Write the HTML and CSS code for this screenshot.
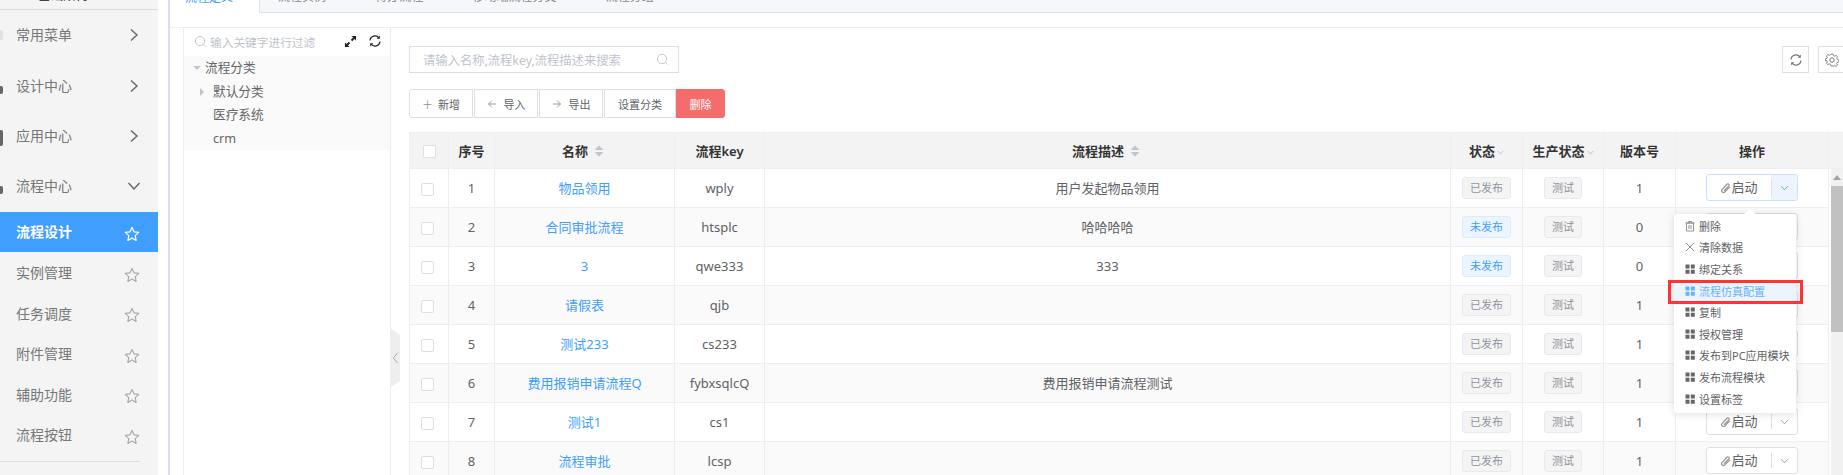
FILE: index.html
```html
<!DOCTYPE html>
<html lang="zh">
<head>
<meta charset="utf-8">
<title>流程设计</title>
<link rel="stylesheet" href="styles.css">
</head>
<body>
<svg class="defs" width="0" height="0" aria-hidden="true">
  <symbol id="star" viewBox="0 0 16 16"><path d="M8 1.400l2 4.400 4.700.6-3.500 3.200.9 4.800L8 11.900l-4.100 2.500.9-4.800L1.300 6.400 6 5.800z" fill="none" stroke="currentColor" stroke-width="1.200" stroke-linejoin="round"/></symbol>
  <symbol id="right" viewBox="0 0 10 14"><path d="M2 1.500L8 7l-6 5.500" fill="none" stroke="currentColor" stroke-width="1.400"/></symbol>
  <symbol id="down" viewBox="0 0 14 10"><path d="M1.500 2L7 8l5.500-6" fill="none" stroke="currentColor" stroke-width="1.400"/></symbol>
  <symbol id="grid" viewBox="0 0 12 12"><path d="M1.500 1.500h4v4h-4zM6.800 1.500h4v4h-4zM1.500 6.800h4v4h-4zM6.800 6.800h4v4h-4z" fill="currentColor"/></symbol>
  <symbol id="search" viewBox="0 0 14 14"><circle cx="6.500" cy="6.500" r="5" fill="none" stroke="currentColor"/><path d="M10 10l2.500 2.500" stroke="currentColor"/></symbol>
  <symbol id="clip" viewBox="0 0 14 14"><path d="M12.500 5.500L6.300 12a2.400 2.400 0 0 1-3.500-3.300l6-6.500a1.600 1.600 0 0 1 2.400 2.200L5.200 10.500" fill="none" stroke="currentColor" stroke-width="1.500"/></symbol>
  <symbol id="sync" viewBox="0 0 14 14"><path d="M2 6.500A5 5 0 0 1 11 4M12 7.500A5 5 0 0 1 3 10" fill="none" stroke="currentColor" stroke-width="1.200"/><path d="M11.800 1.500v3.200H8.600zM2.200 12.500V9.300h3.200z" fill="currentColor"/></symbol>
  <symbol id="caret" viewBox="0 0 10 12"><path d="M5 .5L9.500 5h-9zM5 11.500L.5 7h9z" fill="currentColor"/></symbol>
</svg>

<div class="page">
  <aside class="sidebar">
    <div class="brand"><span class="clipped">基础架构</span></div>
    <div class="menu-row"><i class="sliver sliver-light"></i><span class="menu-label">常用菜单</span><svg class="chev"><use href="#right"/></svg></div>
    <div class="menu-row"><i class="sliver sliver-low"></i><span class="menu-label">设计中心</span><svg class="chev"><use href="#right"/></svg></div>
    <div class="menu-row"><i class="sliver sliver-tall"></i><span class="menu-label">应用中心</span><svg class="chev"><use href="#right"/></svg></div>
    <div class="menu-row"><i class="sliver sliver-low"></i><span class="menu-label">流程中心</span><svg class="chev chev-down"><use href="#down"/></svg></div>
    <div class="sub-row sub-active"><span class="menu-label">流程设计</span><svg class="star"><use href="#star"/></svg></div>
    <div class="sub-row"><span class="menu-label">实例管理</span><svg class="star"><use href="#star"/></svg></div>
    <div class="sub-row"><span class="menu-label">任务调度</span><svg class="star"><use href="#star"/></svg></div>
    <div class="sub-row"><span class="menu-label">附件管理</span><svg class="star"><use href="#star"/></svg></div>
    <div class="sub-row"><span class="menu-label">辅助功能</span><svg class="star"><use href="#star"/></svg></div>
    <div class="sub-row"><span class="menu-label">流程按钮</span><svg class="star"><use href="#star"/></svg></div>
    <div class="side-divider"></div>
  </aside>

  <main class="main">
    <nav class="tabs">
      <div class="tab tab-active">流程定义**</div>
      <div class="tab">流程实例**</div>
      <div class="tab">待办流程**</div>
      <div class="tab">移动端流程分类**</div>
      <div class="tab">流程分组**</div>
      <div class="tab-rest"></div>
    </nav>

    <div class="content">
      <section class="tree">
        <div class="tree-search">
          <svg class="tree-search-icon"><use href="#search"/></svg>
          <span class="tree-placeholder">输入关键字进行过滤</span>
          <svg class="expand-icon" viewBox="0 0 14 14"><path d="M8 1h5v5l-1.800-1.800-2.400 2.400-1.400-1.400 2.400-2.400zM6 13H1V8l1.800 1.800 2.400-2.400 1.400 1.400-2.400 2.400z" fill="#222"/></svg>
          <svg class="sync-dark"><use href="#sync"/></svg>
        </div>
        <div class="tree-list">
          <div class="tree-node"><i class="tri-down"></i>流程分类</div>
          <div class="tree-node tree-child"><i class="tri-right"></i>默认分类</div>
          <div class="tree-node tree-child">医疗系统</div>
          <div class="tree-node tree-child">crm</div>
        </div>
      </section>

      <section class="list">
        <div class="toolbar">
          <div class="search-box"><span class="search-ph">请输入名称,流程key,流程描述来搜索</span><svg class="search-icon"><use href="#search"/></svg></div>
          <div class="tool-group">
            <div class="tool"><svg class="tool-icon"><use href="#sync"/></svg></div>
            <div class="tool"><svg class="tool-icon" viewBox="0 0 14 14"><circle cx="7" cy="7" r="2.200" fill="none" stroke="currentColor"/><path d="M6 1h2l.4 1.600 1.300.6 1.500-.8 1.300 1.400-.8 1.400.6 1.300 1.600.4v2l-1.600.4-.6 1.300.8 1.500-1.400 1.300-1.400-.8-1.300.6L8 13H6l-.4-1.600-1.300-.6-1.500.8-1.300-1.400.8-1.400-.6-1.300L.1 8V6l1.600-.4.600-1.300-.8-1.500 1.400-1.300 1.400.8 1.300-.6z" fill="none" stroke="currentColor" stroke-width=".9"/></svg></div>
          </div>
        </div>

        <div class="actions">
          <div class="btn btn-add"><span class="btn-glyph">＋</span>新增</div>
          <div class="btn btn-io"><svg class="arrow" viewBox="0 0 10 10"><path d="M9 5H1.500M5 1.500L1.500 5 5 8.500" fill="none" stroke="currentColor" stroke-width=".9"/></svg>导入</div>
          <div class="btn btn-io"><svg class="arrow" viewBox="0 0 10 10"><path d="M1 5h7.500M5 1.500L8.500 5 5 8.500" fill="none" stroke="currentColor" stroke-width=".9"/></svg>导出</div>
          <div class="btn btn-cat">设置分类</div>
          <div class="btn btn-del">删除</div>
        </div>

        <table class="grid grid-head">
          <colgroup><col class="c1"><col class="c2"><col class="c3"><col class="c4"><col class="c5"><col class="c6"><col class="c7"><col class="c8"><col class="c9"><col class="c10"></colgroup>
          <tr>
            <th><span class="check"></span></th>
            <th>序号</th>
            <th>名称<svg class="sort"><use href="#caret"/></svg></th>
            <th>流程key</th>
            <th>流程描述<svg class="sort"><use href="#caret"/></svg></th>
            <th>状态<svg class="mini-down"><use href="#down"/></svg></th>
            <th>生产状态<svg class="mini-down"><use href="#down"/></svg></th>
            <th>版本号</th>
            <th>操作</th>
            <th></th>
          </tr>
        </table>

        <div class="grid-wrap">
          <table class="grid grid-body">
            <colgroup><col class="c1"><col class="c2"><col class="c3"><col class="c4"><col class="c5"><col class="c6"><col class="c7"><col class="c8"><col class="c9"></colgroup>
            <tr>
              <td class="td-check"><span class="check"></span></td><td>1</td><td class="link">物品领用</td><td>wply</td><td>用户发起物品领用</td>
              <td><span class="tag">已发布</span></td><td><span class="tag tag-sm">测试</span></td><td>1</td>
              <td><div class="start start-on"><span class="start-main"><svg class="clip"><use href="#clip"/></svg>启动</span><span class="start-more"><svg class="more-icon"><use href="#down"/></svg></span></div></td>
            </tr>
            <tr>
              <td class="td-check"><span class="check"></span></td><td>2</td><td class="link">合同审批流程</td><td>htsplc</td><td>哈哈哈哈</td>
              <td><span class="tag tag-blue">未发布</span></td><td><span class="tag tag-sm">测试</span></td><td>0</td>
              <td><div class="start"><span class="start-main"><svg class="clip"><use href="#clip"/></svg>启动</span><span class="start-more"><svg class="more-icon"><use href="#down"/></svg></span></div></td>
            </tr>
            <tr>
              <td class="td-check"><span class="check"></span></td><td>3</td><td class="link">3</td><td>qwe333</td><td>333</td>
              <td><span class="tag tag-blue">未发布</span></td><td><span class="tag tag-sm">测试</span></td><td>0</td>
              <td><div class="start"><span class="start-main"><svg class="clip"><use href="#clip"/></svg>启动</span><span class="start-more"><svg class="more-icon"><use href="#down"/></svg></span></div></td>
            </tr>
            <tr>
              <td class="td-check"><span class="check"></span></td><td>4</td><td class="link">请假表</td><td>qjb</td><td></td>
              <td><span class="tag">已发布</span></td><td><span class="tag tag-sm">测试</span></td><td>1</td>
              <td><div class="start"><span class="start-main"><svg class="clip"><use href="#clip"/></svg>启动</span><span class="start-more"><svg class="more-icon"><use href="#down"/></svg></span></div></td>
            </tr>
            <tr>
              <td class="td-check"><span class="check"></span></td><td>5</td><td class="link">测试233</td><td>cs233</td><td></td>
              <td><span class="tag">已发布</span></td><td><span class="tag tag-sm">测试</span></td><td>1</td>
              <td><div class="start"><span class="start-main"><svg class="clip"><use href="#clip"/></svg>启动</span><span class="start-more"><svg class="more-icon"><use href="#down"/></svg></span></div></td>
            </tr>
            <tr>
              <td class="td-check"><span class="check"></span></td><td>6</td><td class="link">费用报销申请流程Q</td><td>fybxsqlcQ</td><td>费用报销申请流程测试</td>
              <td><span class="tag">已发布</span></td><td><span class="tag tag-sm">测试</span></td><td>1</td>
              <td><div class="start"><span class="start-main"><svg class="clip"><use href="#clip"/></svg>启动</span><span class="start-more"><svg class="more-icon"><use href="#down"/></svg></span></div></td>
            </tr>
            <tr>
              <td class="td-check"><span class="check"></span></td><td>7</td><td class="link">测试1</td><td>cs1</td><td></td>
              <td><span class="tag">已发布</span></td><td><span class="tag tag-sm">测试</span></td><td>1</td>
              <td><div class="start"><span class="start-main"><svg class="clip"><use href="#clip"/></svg>启动</span><span class="start-more"><svg class="more-icon"><use href="#down"/></svg></span></div></td>
            </tr>
            <tr>
              <td class="td-check"><span class="check"></span></td><td>8</td><td class="link">流程审批</td><td>lcsp</td><td></td>
              <td><span class="tag">已发布</span></td><td><span class="tag tag-sm">测试</span></td><td>1</td>
              <td><div class="start"><span class="start-main"><svg class="clip"><use href="#clip"/></svg>启动</span><span class="start-more"><svg class="more-icon"><use href="#down"/></svg></span></div></td>
            </tr>
          </table>
          <div class="scrollbar"><i class="scroll-up"></i><div class="scroll-thumb"></div></div>
        </div>
      </section>
    </div>
  </main>

  <div class="handle"><svg class="handle-icon" viewBox="0 0 8 14"><path d="M6.500 1L1.500 7l5 6" fill="none" stroke="currentColor" stroke-width="1.100"/></svg></div>

  <div class="dropdown">
    <i class="drop-arrow"></i>
    <div class="drop-item"><svg class="drop-icon" viewBox="0 0 12 12"><path d="M2.500 3h7v8h-7zM1.500 3h9M4.500 3V1.500h3V3M5 5v4M7 5v4" fill="none" stroke="currentColor"/></svg>删除</div>
    <div class="drop-item"><svg class="drop-icon" viewBox="0 0 12 12"><path d="M2 2l8 8M10 2l-8 8" stroke="currentColor"/></svg>清除数据</div>
    <div class="drop-item"><svg class="drop-icon drop-grid"><use href="#grid"/></svg>绑定关系</div>
    <div class="drop-item drop-on"><svg class="drop-icon"><use href="#grid"/></svg>流程仿真配置</div>
    <div class="drop-item"><svg class="drop-icon drop-grid"><use href="#grid"/></svg>复制</div>
    <div class="drop-item"><svg class="drop-icon drop-grid"><use href="#grid"/></svg>授权管理</div>
    <div class="drop-item"><svg class="drop-icon drop-grid"><use href="#grid"/></svg>发布到PC应用模块</div>
    <div class="drop-item"><svg class="drop-icon drop-grid"><use href="#grid"/></svg>发布流程模块</div>
    <div class="drop-item"><svg class="drop-icon drop-grid"><use href="#grid"/></svg>设置标签</div>
  </div>
  <div class="red-mark"></div>
</div>
</body>
</html>
```

FILE: styles.css
```css
* { box-sizing: border-box; }
html, body { margin: 0; padding: 0; background: #fff; }
body {
  font-family: "Noto Sans", "Noto Sans CJK SC", "Liberation Sans", sans-serif;
  font-size: 13px;
  color: #606266;
}
.defs { position: absolute; }
.page { position: relative; display: flex; width: 1843px; height: 475px; overflow: hidden; }

/* sidebar */
.sidebar { width: 158px; flex: none; height: 475px; background: #f4f4f4; margin-right: 10px; }
.brand { height: 10px; border-bottom: 1px solid #dcdcdc; overflow: hidden; display: flex; padding-left: 38px; align-items: flex-end; }
.clipped { display: block; height: 20px; margin-bottom: 3px; line-height: 20px; font-size: 12.500px; color: #444; font-weight: 500; flex: none; }
.menu-row { height: 50.400px; display: flex; align-items: center; color: #666; }
.menu-label { font-size: 14px; color: #777; line-height: 20px; flex: 1; }
.sliver { width: 3px; height: 10px; margin-right: 13px; flex: none; background: #666; border-radius: 0 2px 2px 0; }
.sliver-light { background: #e2e2e2; }
.sliver-low { height: 8px; margin-top: 8px; }
.sliver-tall { height: 16px; margin-top: 4px; }
.chev { width: 10px; height: 14px; margin-right: 19px; color: #666; flex: none; }
.chev-down { width: 14px; height: 10px; margin-right: 17px; }
.sub-row { height: 40.500px; display: flex; align-items: center; padding: 3px 18px 0 16px; }
.star { width: 16px; height: 16px; color: #aaa; flex: none; margin-top: 3px; }
.sub-active { background: #409eff; height: 40px; padding-top: 1px; }
.sub-active .menu-label { color: #fff; font-weight: 700; }
.sub-active .star { color: #fff; }
.side-divider { height: 1px; width: 140px; background: #ddd; margin-top: 7px; }

/* main */
.main { flex: 1; min-width: 0; border-left: 2px solid #dcdde6; }
.tabs { display: flex; height: 13px; }
.tab { padding: 0 18px 8px; height: 13px; border-bottom: 1px solid #dfe4ed; background: #f5f7fa; overflow: hidden; display: flex; align-items: flex-end; font-size: 12px; line-height: 14px; color: #888; white-space: nowrap; flex: none; }
.tab-active { width: 90px; padding-left: 15px; background: #fff; color: #409eff; border-bottom: 0; border-right: 1px solid #dfe4ed; }
.tab-rest { flex: 1; background: #f5f7fa; border-bottom: 1px solid #dfe4ed; }
.content { margin-top: 14px; border-top: 1px solid #eee; padding-left: 13px; display: flex; height: 448px; }

/* tree */
.tree { width: 208px; flex: none; border-left: 1px solid #eee; border-right: 1px solid #eee; }
.tree-search { height: 28px; display: flex; align-items: center; padding: 0 0 2px 10px; }
.tree-search-icon { width: 13px; height: 13px; color: #c0c4cc; margin-right: 3px; flex: none; }
.tree-placeholder { font-size: 11.700px; color: #c0c4cc; width: 134px; white-space: nowrap; }
.expand-icon { width: 13px; height: 13px; flex: none; margin-right: 11px; }
.sync-dark { width: 14px; height: 14px; color: #222; flex: none; }
.tree-list { background: #fafafa; height: 94px; }
.tree-node { height: 23.500px; line-height: 23px; font-size: 12.700px; color: #666; padding-left: 21px; position: relative; display: flex; align-items: center; }
.tree-child { padding-left: 29px; }
.tri-down { position: absolute; left: 9px; top: 10px; border: 4px solid transparent; border-top: 4px solid #c0c4cc; border-bottom: 0; width: 0; height: 0; }
.tri-right { position: absolute; left: 16px; top: 8px; border: 4px solid transparent; border-left: 4px solid #c0c4cc; border-right: 0; width: 0; height: 0; }

/* list */
.list { flex: 1; min-width: 0; padding: 18px 0 0 18px; }
.toolbar { display: flex; justify-content: space-between; height: 27px; }
.search-box { width: 270px; height: 27px; border: 1px solid #dcdfe6; display: flex; align-items: center; justify-content: space-between; padding: 0 9px 0 13px; }
.search-ph { font-size: 12.300px; color: #c0c4cc; white-space: nowrap; }
.search-icon { width: 13px; height: 13px; color: #c0c4cc; flex: none; }
.tool-group { display: flex; gap: 9px; margin-right: -2px; }
.tool { width: 27px; height: 27px; border: 1px solid #dcdfe6; display: flex; align-items: center; justify-content: center; color: #777; }
.tool-icon { width: 14px; height: 14px; }
.actions { display: flex; gap: 1px; margin-top: 16px; height: 29px; }
.btn { height: 29px; border: 1px solid #dcdfe6; display: flex; align-items: center; justify-content: center; font-size: 11px; color: #606266; white-space: nowrap; }
.btn-add { width: 64px; border-radius: 3px 0 0 3px; }
.btn-io { width: 64px; }
.btn-cat { width: 72px; margin-right: -1px; }
.btn-del { width: 49px; background: #f56c6c; border-color: #f56c6c; color: #fff; border-radius: 0 3px 3px 0; }
.btn-glyph { color: #909399; margin-right: 5px; }
.arrow { width: 10px; height: 10px; color: #909399; margin-right: 7px; flex: none; }

/* table */
.grid { border-collapse: separate; border-spacing: 0; table-layout: fixed; }
.grid-head { width: 1434px; margin-top: 14px; }
.grid-body { width: 1420px; flex: none; }
.c1 { width: 40px; }
.c2 { width: 46px; }
.c3 { width: 180px; }
.c4 { width: 90px; }
.c5 { width: 686px; }
.c6 { width: 72px; }
.c7 { width: 81px; }
.c8 { width: 72px; }
.c9 { width: 153px; }
.grid th, .grid td { border-right: 1px solid #ebeef5; border-bottom: 1px solid #ebeef5; text-align: center; padding: 0; }
.grid th:first-child, .grid td:first-child { border-left: 1px solid #ebeef5; }
.grid th { height: 37px; border-top: 1px solid #ebeef5; background: #f3f3f4; color: #333; font-size: 13px; font-weight: 600; white-space: nowrap; }
.grid td { height: 39px; background: #fff; font-size: 13px; color: #606266; white-space: nowrap; padding-bottom: 1px; }
.grid tr:nth-child(even) td { background: #fafafa; }
.grid th:last-child { border-right: 0; }
.grid td.link { color: #409eff; }
.td-check { padding-right: 4px !important; }
.check { display: inline-block; width: 13px; height: 13px; border: 1px solid #dcdfe6; border-radius: 2px; background: #fff; vertical-align: middle; }
.sort { width: 10px; height: 12px; color: #c0c4cc; margin: 0 3px 0 6px; vertical-align: -1px; }
.mini-down { width: 7px; height: 5px; color: #a8abb2; margin-left: 2px; vertical-align: 1px; }
.tag { display: inline-block; width: 49px; height: 22px; line-height: 20px; border: 1px solid #e9e9eb; background: #f4f4f5; color: #909399; border-radius: 3px; font-size: 11px; text-align: center; vertical-align: middle; }
.tag-sm { width: 38px; }
.tag-blue { background: #ecf5ff; border-color: #d9ecff; color: #409eff; }
.start { display: inline-flex; width: 92px; height: 27px; border: 1px solid #dcdfe6; border-radius: 3px; vertical-align: middle; background: #fff; overflow: hidden; }
.start-main { flex: 1; display: flex; align-items: center; justify-content: center; font-size: 13px; color: #606266; line-height: 1; }
.clip { width: 11px; height: 12px; color: #909399; margin-right: 0; }
.start-more { width: 26px; display: flex; align-items: center; justify-content: center; position: relative; color: #909399; }
.start-more::before { content: ""; position: absolute; left: 0; top: 5px; bottom: 5px; width: 1px; background: #dcdfe6; }
.more-icon { width: 9px; height: 6px; }
.start-on { border-color: #c6e2ff; }
.start-on .start-more { background: #ecf5ff; color: #409eff; }
.grid-wrap { display: flex; align-items: flex-start; }
.scrollbar { width: 12px; margin-left: 2px; height: 310px; background: #f1f1f1; flex: none; display: flex; flex-direction: column; align-items: center; }
.scroll-up { width: 0; height: 0; border: 4px solid transparent; border-bottom: 5px solid #a3a3a3; border-top: 0; margin: 6px 0 6px; flex: none; }
.scroll-thumb { width: 12px; height: 146px; background: #c1c1c1; }

/* collapse handle */
.handle { position: absolute; left: 390px; top: 328px; width: 10px; height: 60px; background: #eee; clip-path: polygon(0 0, 100% 12%, 100% 88%, 0 100%); display: flex; align-items: center; justify-content: center; color: #aaa; }
.handle-icon { width: 7px; height: 14px; }

/* dropdown */
.dropdown { position: absolute; left: 1674px; top: 214px; width: 122px; height: 199px; background: #fff; border-radius: 3px; box-shadow: 0 1px 8px rgba(0, 0, 0, .13); padding: 1px 0; }
.drop-arrow { position: absolute; left: 70px; top: -5px; width: 0; height: 0; border: 6px solid transparent; border-bottom: 5px solid #fff; border-top: 0; }
.drop-item { height: 21.600px; display: flex; align-items: center; padding-left: 10px; font-size: 11px; color: #606266; white-space: nowrap; }
.drop-icon { width: 12px; height: 12px; color: #909399; margin-right: 3px; flex: none; }
.drop-grid { color: #666; }
.drop-on { background: #ecf5ff; color: #66b1ff; }
.drop-on .drop-icon { color: #66b1ff; }
.red-mark { position: absolute; left: 1668px; top: 280px; width: 135px; height: 24px; border: 3px solid #f33; }
```
